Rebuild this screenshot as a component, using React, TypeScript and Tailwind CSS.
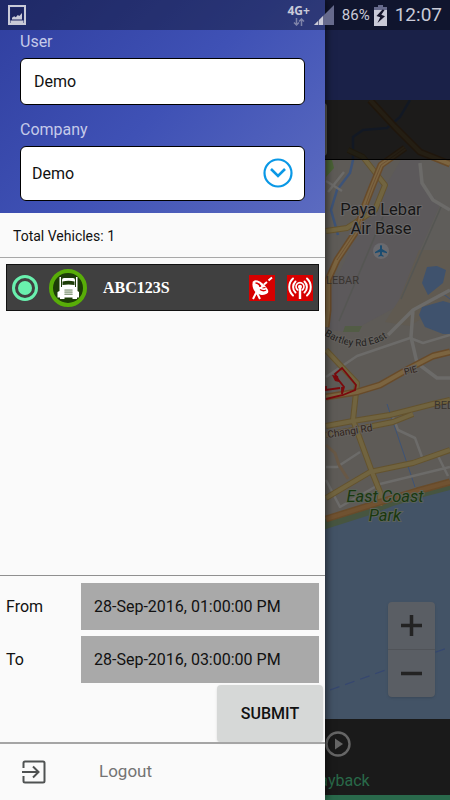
import React, { useState } from "react";

const StatusBar = () => {
  return (
    <div className="absolute inset-x-0 top-0 z-20 flex h-[30px] items-center justify-between bg-black/35 pl-2 pr-2 text-[#c9cad8]">
      <svg className="h-5 w-[18px]" viewBox="0 0 18 20" aria-hidden="true">
        <rect x="1" y="1" width="16" height="18" fill="none" stroke="#c9cad8" strokeWidth="2" />
        <rect x="3" y="3" width="12" height="13.500" fill="#1d2560" />
        <rect x="2.500" y="15.500" width="13" height="2.500" fill="#c9cad8" />
        <path d="M4 14.500v-1.800l2.200-1.400 1.600.9 2-2.200 1.500 1 2.700-3v6.500z" fill="#c9cad8" />
      </svg>
      <div className="flex items-center">
        <div className="flex flex-col items-center">
          <span className="font-['Noto_Sans',sans-serif] text-xs font-bold leading-[14px]">4G+</span>
          <svg className="h-2 w-3" viewBox="0 0 12 8" aria-hidden="true">
            <path
              d="M3.500 0v7M1 4.500 3.500 7 6 4.500M8.500 8V1M6 3.500 8.500 1 11 3.500"
              fill="none"
              stroke="#7e83a8"
              strokeWidth="1.500"
            />
          </svg>
        </div>
        <svg className="ml-1 h-5 w-5" viewBox="0 0 20 20" aria-hidden="true">
          <path d="M20 0v20H0z" fill="#666a8c" />
          <path d="M0 20l4-4v4zM5 20v-5l4-4v9z" fill="#c9cad8" />
        </svg>
        <span className="ml-2 text-[15px] leading-5">86%</span>
        <svg className="ml-1 h-[21px] w-[13px]" viewBox="0 0 13 21" aria-hidden="true">
          <path d="M4 0h5v2h4v3H0V2h4z" fill="#666a8c" />
          <path d="M0 5h13v16H0z" fill="#c9cad8" />
          <path d="M8.500 4.500 2.500 11l3.700 1.300L3.500 18l7.500-6.800-3.700-1.400L10.500 5z" fill="#14142a" />
        </svg>
        <span className="ml-2 text-[19px] leading-6">12:07</span>
      </div>
    </div>
  );
};

const Map = () => {
  return (
    <svg
      className="absolute inset-0 h-full w-full"
      viewBox="0 100 450 619"
      preserveAspectRatio="xMaxYMin slice"
      fontFamily="Roboto, sans-serif"
      role="img"
      aria-label="Map"
    >
      <rect x="0" y="100" width="450" height="619" fill="#5e5b57" />
      <path d="M401 160 450 160V215L440 205 398 306 350 332 326 330V300L360 230z" fill="#5c595b" />
      <path d="M420 160 450 160V250L420 250 440 205 422 183z" fill="#5f5d5a" />
      <path d="M419 250 399 300 385 322 410 326 450 300V250z" fill="#605a51" />
      <path d="M441 207 401 299M383 217 339 321" stroke="#555653" strokeWidth="1.500" fill="none" />
      <path d="M345 326h17l-3 6h-16z" fill="#525c45" />
      <path d="M326 160h6l2 8-8 9z" fill="#4a6235" />

      {/* sea and coast */}
      <path d="M0 619 326 519 387 500 417 491 450 482V719H0z" fill="#475540" />
      <path d="M0 630 326 529 370 515 393 506 427 496 450 490V719H0z" fill="#435366" />
      <path d="M427 267l10-1 9 4-3 13-15 12-6-12zM422 307l21-6 7 2v31h-7l-18-7-6-12z" fill="#3f526d" />

      {/* water courses */}
      <g fill="none" stroke="#3d5377">
        <path d="M410 100l-10 17-13 11-24 2-10 7v23l-3 13-13 17-6 20 7 25" strokeWidth="2.500" />
        <path d="M387 404 415 487M442 293l8 6" strokeWidth="1" />
      </g>

      {/* minor roads */}
      <g fill="none" stroke="#6c6b69" strokeWidth="2.500" strokeLinejoin="round">
        <path d="M420 163l2 20 11 17 17 10" strokeWidth="3.500" />
        <path d="M388 335l25-25 37-20M413 310l-2 27 6 26 20 15h13" strokeWidth="3.500" />
        <path d="M326 377l31-21 53-18 13 5 27-8" />
        <path d="M326 467h11l23-15M326 480l14 27 40-23 70-17M393 417l5 13 17 8 7 19M438 456l10 20" />
        <path d="M326 181l16 10M344 172l-16 20" />
      </g>
      <path d="M326 445l9 8 4 12 9 14" stroke="#685846" strokeWidth="3" fill="none" />

      {/* main roads */}
      <g fill="none" strokeLinejoin="round">
        <g stroke="#64532e" strokeWidth="6">
          <path d="M348 150l15 7 22 28-10 25-28 18-21 3" />
          <path d="M326 350l14 15 17 18-4 37 19 52 8 20v14" />
          <path d="M326 426l27-5 37-6 43-11 17-4M326 435l27-5 40-8 20-8" />
          <path d="M326 498l44-26 43-9 37-13" />
        </g>
        <g stroke="#716440" strokeWidth="4">
          <path d="M348 150l15 7 22 28-10 25-28 18-21 3" />
          <path d="M326 350l14 15 17 18-4 37 19 52 8 20v14" />
          <path d="M326 426l27-5 37-6 43-11 17-4M326 435l27-5 40-8 20-8" />
          <path d="M326 498l44-26 43-9 37-13" />
        </g>
        <g stroke="#684b2a" strokeWidth="7">
          <path d="M370 100l25 27 25 25 30 12M405 148l-24 17-9 22-9 23-6 20-20 30-9 20v30l-2 17" />
          <path d="M326 397l31-5 23-7 30-17 23-12 17-4" />
          <path d="M326 519l61-19 30-9 33-9" />
        </g>
        <g stroke="#7b6440" strokeWidth="4">
          <path d="M370 100l25 27 25 25 30 12M405 148l-24 17-9 22-9 23-6 20-20 30-9 20v30l-2 17" />
          <path d="M326 397l31-5 23-7 30-17 23-12 17-4" />
        </g>
        <path d="M326 519l61-19 30-9 33-9" stroke="#705231" strokeWidth="4" />
        <path d="M405 148 381 165 372 187 357 230 337 260" stroke="#6c5033" strokeWidth="1" />
      </g>

      {/* vehicle trail */}
      <path
        d="M326 399l17-4 12-5 1-5-14-17-7 6 2 4 7 9-2 7M326 386v4l14-2M342 387v7"
        fill="none"
        stroke="#7a0a0d"
        strokeWidth="1.800"
      />
      <path d="M332 375l6 1 1 6-4-1z" fill="#7a0a0d" />

      <path d="M330 690 450 647" stroke="#364770" strokeWidth="1.200" strokeDasharray="10 6" fill="none" />

      <circle cx="381" cy="251" r="8" fill="#6a6a6e" />
      <path
        d="M381 245c.8 0 1 .8 1 1.500v2.500l5 3v1.200l-5-1.300v2.600l1.600 1.200v1l-2.600-.7-2.600.7v-1l1.600-1.200v-2.600l-5 1.300V252l5-3v-2.500c0-.7.2-1.500 1-1.500z"
        fill="#1b4c70"
      />

      <g fill="#161616" fontSize="16.500" textAnchor="middle" stroke="#6a6869" strokeWidth="2" paintOrder="stroke">
        <text x="381" y="215">Paya Lebar</text>
        <text x="381" y="234">Air Base</text>
      </g>
      <g fill="#393430" fontSize="11">
        <text x="326" y="284">LEBAR</text>
        <text x="434" y="409">BED</text>
      </g>
      <path id="bartley" d="M324 335Q358 357 390 336" fill="none" />
      <g fill="#221f1d" fontSize="10" stroke="#64615e" strokeWidth="2" paintOrder="stroke">
        <text>
          <textPath href="#bartley">Bartley Rd East</textPath>
        </text>
        <text x="328" y="438" transform="rotate(-9 328 438)" fill="#30231a">Changi Rd</text>
        <text x="405" y="375" fontSize="9" transform="rotate(-15 405 375)" fill="#30231a">PIE</text>
      </g>
      <g
        fill="#19380f"
        fontSize="16.500"
        fontStyle="italic"
        textAnchor="middle"
        stroke="#5c6259"
        strokeWidth="2"
        paintOrder="stroke"
      >
        <text x="385" y="502">East Coast</text>
        <text x="385" y="521">Park</text>
      </g>
    </svg>
  );
};

const TrackingPage = () => {
  return (
    <div className="relative flex min-h-full flex-col [grid-area:1/1]">
      <header className="h-[100px] bg-[#1a2148]" />
      <main className="relative flex-1 overflow-hidden">
        <Map />
        <div className="relative h-[60px] border-b border-black bg-black/70 py-[3px] pr-[123px]">
          <div className="h-full rounded-sm bg-[#555550]" />
        </div>
        <div className="absolute bottom-[22px] right-[15px] flex w-[47px] flex-col rounded-sm bg-[#5a5e64] shadow-sm">
          <button
            aria-label="Zoom in"
            className="flex h-12 items-center justify-center border-b border-[#505358]"
          >
            <svg className="h-[21px] w-[21px]" viewBox="0 0 21 21">
              <path d="M10.500 0v21M0 10.500h21" stroke="#232323" strokeWidth="3.500" />
            </svg>
          </button>
          <button aria-label="Zoom out" className="flex h-[47px] items-center justify-center">
            <svg className="h-[21px] w-[21px]" viewBox="0 0 21 21">
              <path d="M0 10.500h21" stroke="#232323" strokeWidth="3.500" />
            </svg>
          </button>
        </div>
      </main>
      <nav className="grid grid-cols-2 bg-[#1a1a1a]">
        <button className="col-start-2 flex h-[81px] flex-col items-center border-b-[5px] border-[#29694b] pt-3 text-base leading-5 text-[#296949]">
          <svg className="mb-3.5 h-[26px] w-[26px]" viewBox="0 0 26 26" aria-hidden="true">
            <circle cx="13" cy="13" r="11.500" fill="none" stroke="#666" strokeWidth="2.400" />
            <path d="M10 7.500v11l8-5.500z" fill="#666" />
          </svg>
          Playback
        </button>
      </nav>
    </div>
  );
};

const TruckIcon = () => (
  <svg className="h-[38px] w-[38px]" viewBox="0 0 38 38" aria-hidden="true">
    <circle cx="19" cy="19" r="17" fill="#1d3d08" stroke="#58ad08" strokeWidth="4" />
    <path
      d="M10.500 8h1.500v10h1V11q0-2 2-2h9q2 0 2 2v7h1V8h1.500v14l1.500 1v5.500h-2V30h-4.500v-1.500h-8V30H11v-1.500H8.500V23l2-1z"
      fill="#fff"
    />
    <path d="M13.500 12.500q6-1.500 12 0V16q-6-1-12 0z" fill="#1d3d08" />
    <rect x="15.500" y="20.500" width="8" height="5.500" fill="#c9d2c4" />
    <path d="M15.500 21h8M15.500 23.200h8M15.500 25.500h8" stroke="#8da083" strokeWidth="1" />
  </svg>
);

const SatelliteIcon = () => (
  <svg className="h-[26px] w-[26px]" viewBox="0 0 26 26" role="img" aria-label="GPS">
    <rect width="26" height="26" fill="#d70000" />
    <path d="M4 6C2 12 5.500 18.500 11.500 19.800c3 .6 6-.3 7.500-2.300z" fill="#fff" />
    <ellipse cx="11.800" cy="11.800" rx="9.200" ry="3.800" transform="rotate(40 11.800 11.800)" fill="#fff" />
    <path d="M6.500 8c2.500 0 4.500 2 4.500 4M11 14.500c2 1.200 4.500 1.500 6 .5" stroke="#d70000" strokeWidth="1.400" fill="none" />
    <path d="M9.500 8.500l2.500 3M13.500 13l3-.5" stroke="#d70000" strokeWidth="1.200" />
    <path d="M15 9.500l3-2.500M19.500 5.500 23 2.500" stroke="#fff" strokeWidth="2" />
    <path d="M7.500 17 4 24M8 18l3 6" stroke="#fff" strokeWidth="2" />
  </svg>
);

const AntennaIcon = () => (
  <svg className="h-[26px] w-[26px]" viewBox="0 0 26 26" role="img" aria-label="Signal">
    <rect width="26" height="26" fill="#d70000" />
    <g fill="none" stroke="#fff" strokeWidth="2" strokeLinecap="round">
      <path d="M6 3.500a11.500 11.500 0 0 0 0 17M20 3.500a11.500 11.500 0 0 1 0 17" />
      <path d="M8.500 6.500a7.500 7.500 0 0 0 0 11M17.500 6.500a7.500 7.500 0 0 1 0 11" />
      <path d="M10.800 15a4 4 0 1 1 4.400 0" strokeWidth="1.600" />
    </g>
    <circle cx="13" cy="11.800" r="2" fill="#fff" />
    <path d="M11.800 12h2.400v12h-2.400z" fill="#fff" />
  </svg>
);

const dates = [
  { id: "from", label: "From", value: "28-Sep-2016, 01:00:00 PM" },
  { id: "to", label: "To", value: "28-Sep-2016, 03:00:00 PM" },
];

const Drawer = () => {
  const [user, setUser] = useState("Demo");

  return (
    <aside className="relative z-10 mr-[125px] flex flex-col bg-[#fafafa] shadow-[1px_0_8px_rgba(0,0,0,0.6)] [grid-area:1/1]">
      <div className="flex flex-col bg-linear-135 from-[#303f9f] via-[#3f51b5] to-[#5c6bc0] px-5 pb-3 pt-8">
        <label htmlFor="user" className="text-base leading-5 text-[#c5cae9]">
          User
        </label>
        <input
          id="user"
          className="mt-1.5 h-[47px] w-full rounded-md border border-black bg-white px-[13px] text-base text-[#111] outline-none"
          value={user}
          onChange={(e) => setUser(e.target.value)}
        />
        <label htmlFor="company" className="mt-[15px] text-base leading-5 text-[#c5cae9]">
          Company
        </label>
        <div className="relative mt-1.5">
          <select
            id="company"
            className="h-[55px] w-full appearance-none rounded-md border border-black bg-white px-[11px] text-base text-[#111] outline-none"
          >
            <option>Demo</option>
          </select>
          <svg
            className="pointer-events-none absolute right-3 top-3 h-[30px] w-[30px]"
            viewBox="0 0 30 30"
            fill="none"
            stroke="#0a98e6"
            aria-hidden="true"
          >
            <circle cx="15" cy="15" r="13.500" strokeWidth="2.200" />
            <path d="M8 11l7 7 7-7" strokeWidth="2.600" />
          </svg>
        </div>
      </div>

      <p className="border-b border-[#a8a8a8] px-[13px] pb-[11px] pt-[13px] text-sm leading-5 text-[#111]">
        Total Vehicles: 1
      </p>

      <div className="flex-1 px-1.5 pt-1.5">
        <label className="flex h-[47px] items-center border border-[#111] bg-[#404040] pl-[5px] pr-[5px]">
          <input
            type="radio"
            name="vehicle"
            aria-label="ABC123S"
            defaultChecked
            className="h-[26px] w-[26px] shrink-0 appearance-none rounded-full border-[3px] border-[#69f0ae] bg-[#69f0ae] bg-clip-content p-[3px]"
          />
          <span className="ml-[11px]">
            <TruckIcon />
          </span>
          <span className="ml-4 flex-1 font-['Liberation_Serif',serif] text-base font-bold text-white">
            ABC123S
          </span>
          <SatelliteIcon />
          <span className="ml-3">
            <AntennaIcon />
          </span>
        </label>
      </div>

      <form className="flex flex-col border-t border-[#8f8f8f] pt-[7px]" onSubmit={(e) => e.preventDefault()}>
        {dates.map((date) => (
          <div key={date.id} className="mb-1.5 flex items-center pl-1.5 pr-1.5">
            <label htmlFor={date.id} className="w-[75px] text-base text-[#111]">
              {date.label}
            </label>
            <input
              id={date.id}
              className="h-[47px] min-w-0 flex-1 bg-[#a9a9a9] px-[13px] text-base text-[#111] outline-none"
              defaultValue={date.value}
            />
          </div>
        ))}
        <button
          type="submit"
          className="-mt-1 mr-0.5 h-[57px] w-[106px] self-end rounded-sm bg-[#d6d8d7] text-base font-medium text-[#111] shadow"
        >
          SUBMIT
        </button>
      </form>

      <button className="flex h-[58px] items-center border-t-2 border-[#a5a5a5] pl-[22px] text-left text-[17px] text-[#737373]">
        <svg className="h-6 w-6" viewBox="0 0 24 24" fill="none" stroke="#4f5252" strokeWidth="2" aria-hidden="true">
          <path d="M1.500 8V3q0-1.500 1.500-1.500h18q1.500 0 1.500 1.500v18q0 1.500-1.500 1.500H3q-1.500 0-1.500-1.500v-5" />
          <path d="M0 12h16M11 6.500l5.500 5.500-5.500 5.500" />
        </svg>
        <span className="ml-[53px]">Logout</span>
      </button>
    </aside>
  );
};

const App = () => {
  return (
    <div className="relative grid min-h-screen overflow-hidden font-[Roboto,sans-serif]">
      <TrackingPage />
      <Drawer />
      <StatusBar />
    </div>
  );
};

export default App;
